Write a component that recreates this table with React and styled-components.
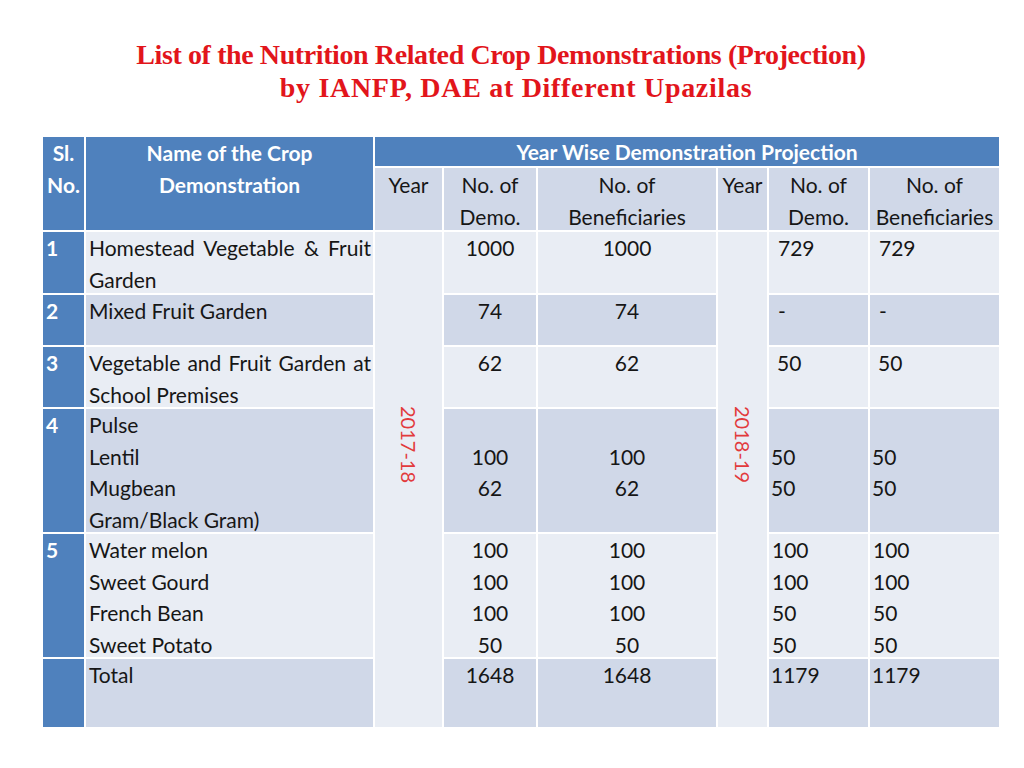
import styled, { createGlobalStyle } from 'styled-components';

const GlobalStyle = createGlobalStyle`
  html, body {
    margin: 0;
    padding: 0;
    background: #ffffff;
  }
`;

const Page = styled.div`
  width: 1024px;
  height: 768px;
  padding-top: 38px;
  box-sizing: border-box;
`;

const Title = styled.h1`
  margin: 0;
  font-family: "Liberation Serif", "Times New Roman", serif;
  font-weight: bold;
  font-size: 28px;
  line-height: 33px;
  color: #e2151b;
  text-align: center;
`;

const TitleLine = styled.span`
  display: block;
  letter-spacing: ${p => p.$spacing}px;
  padding-left: ${p => (p.$shift > 0 ? p.$shift * 2 : 0)}px;
  padding-right: ${p => (p.$shift < 0 ? -p.$shift * 2 : 0)}px;
`;

const Grid = styled.div`
  display: grid;
  grid-template-columns: 41px 287px 67px 92px 178px 49px 99px 129px;
  grid-template-rows: 29px 62px 61px 50px 60px 123px 123px 68px;
  gap: 2px;
  width: 956px;
  margin: 33px 0 0 43px;
  background: #ffffff;
  font-family: Lato, "Liberation Sans", sans-serif;
  font-size: 21px;
  line-height: 31.5px;
  color: #161616;
`;

const HeadCell = styled.div`
  grid-row: span ${p => p.$rows || 1};
  grid-column: span ${p => p.$cols || 1};
  background: #4f81bd;
  color: #ffffff;
  font-weight: bold;
  text-align: center;
  line-height: ${p => (p.$tight ? '30px' : '32px')};
`;

const SubHeadCell = styled.div`
  background: #d0d8e8;
  text-align: center;
  padding-top: 1px;
`;

const SlCell = styled.div`
  background: #4f81bd;
  color: #ffffff;
  font-weight: bold;
  padding-left: 3px;
`;

const NameCell = styled.div`
  background: ${p => (p.$dark ? '#d0d8e8' : '#e9edf4')};
  padding: 0 2px 0 3px;
  text-align: justify;
`;

const NumCell = styled.div`
  background: ${p => (p.$dark ? '#d0d8e8' : '#e9edf4')};
  text-align: ${p => (p.$left ? 'left' : 'center')};
  padding-left: ${p => (p.$left ? `${p.$indent}px` : '0')};
`;

const YearCell = styled.div`
  grid-row: span 6;
  background: #e9edf4;
  display: flex;
  justify-content: center;
  padding-top: 174px;
`;

const YearLabel = styled.span`
  writing-mode: vertical-rl;
  color: #e23a3c;
  font-size: 20px;
  line-height: 24px;
  height: max-content;
`;

const Line = styled.div`
  min-height: 31.5px;
`;

const rows = [
  { sl: '1', name: ['Homestead Vegetable & Fruit Garden'], wrap: true, d1: ['1000'], b1: ['1000'], d2: ['729'], b2: ['729'], indent: 9 },
  { sl: '2', name: ['Mixed Fruit Garden'], dark: true, d1: ['74'], b1: ['74'], d2: ['-'], b2: ['-'], indent: 9 },
  { sl: '3', name: ['Vegetable and Fruit Garden at School Premises'], wrap: true, d1: ['62'], b1: ['62'], d2: ['50'], b2: ['50'], indent: 8 },
  { sl: '4', name: ['Pulse', 'Lentil', 'Mugbean', 'Gram/Black Gram)'], dark: true, d1: ['', '100', '62'], b1: ['', '100', '62'], d2: ['', '50', '50'], b2: ['', '50', '50'], indent: 2 },
  { sl: '5', name: ['Water melon', 'Sweet Gourd', 'French Bean', 'Sweet Potato'], d1: ['100', '100', '100', '50'], b1: ['100', '100', '100', '50'], d2: ['100', '100', '50', '50'], b2: ['100', '100', '50', '50'], indent: 3 },
  { sl: '', name: ['Total'], dark: true, d1: ['1648'], b1: ['1648'], d2: ['1179'], b2: ['1179'], indent: 2 },
];

function Lines({ items }) {
  return items.map((t, i) => <Line key={i}>{t}</Line>);
}

export default function App() {
  return (
    <Page>
      <GlobalStyle />
      <Title>
        <TitleLine $spacing={-0.4} $shift={-11}>List of the Nutrition Related Crop Demonstrations (Projection)</TitleLine>
        <TitleLine $spacing={0.7} $shift={4}>by IANFP, DAE at Different Upazilas</TitleLine>
      </Title>

      <Grid>
        <HeadCell $rows={2}>Sl.<br />No.</HeadCell>
        <HeadCell $rows={2}>Name of the Crop<br />Demonstration</HeadCell>
        <HeadCell $cols={6} $tight>Year Wise Demonstration Projection</HeadCell>

        <SubHeadCell>Year</SubHeadCell>
        <SubHeadCell>No. of<br />Demo.</SubHeadCell>
        <SubHeadCell>No. of<br />Beneficiaries</SubHeadCell>
        <SubHeadCell>Year</SubHeadCell>
        <SubHeadCell>No. of<br />Demo.</SubHeadCell>
        <SubHeadCell>No. of<br />Beneficiaries</SubHeadCell>

        {rows.map((r, i) => (
          <>
            <SlCell key={`sl${i}`}>{r.sl}</SlCell>
            <NameCell key={`n${i}`} $dark={r.dark}>
              {r.wrap ? r.name[0] : <Lines items={r.name} />}
            </NameCell>
            {i === 0 && (
              <YearCell key="y1">
                <YearLabel>2017-18</YearLabel>
              </YearCell>
            )}
            <NumCell key={`d1${i}`} $dark={r.dark}><Lines items={r.d1} /></NumCell>
            <NumCell key={`b1${i}`} $dark={r.dark}><Lines items={r.b1} /></NumCell>
            {i === 0 && (
              <YearCell key="y2">
                <YearLabel>2018-19</YearLabel>
              </YearCell>
            )}
            <NumCell key={`d2${i}`} $dark={r.dark} $left $indent={r.indent}><Lines items={r.d2} /></NumCell>
            <NumCell key={`b2${i}`} $dark={r.dark} $left $indent={r.indent}><Lines items={r.b2} /></NumCell>
          </>
        ))}
      </Grid>
    </Page>
  );
}
